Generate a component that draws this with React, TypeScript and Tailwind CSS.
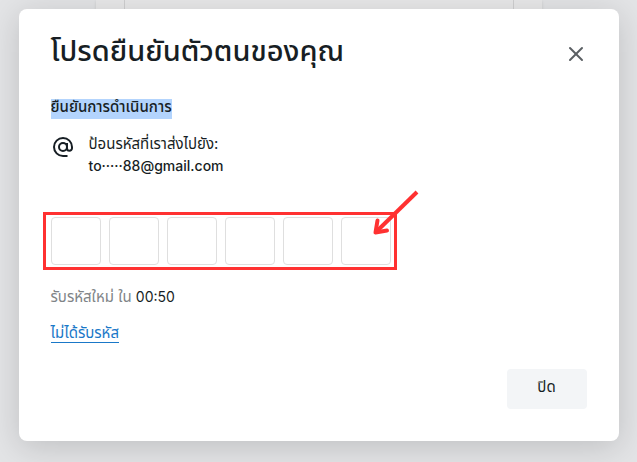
import { X } from "lucide-react";

const CODE_LENGTH = 6;

const Backdrop = () => (
  <div className="absolute inset-0 flex justify-center bg-[#e3e4e6]" aria-hidden="true">
    <div className="h-1/2 w-[446px] bg-[#e8e8e9] px-7 shadow">
      <div className="h-full border-x border-[#cfcfd0]" />
    </div>
  </div>
);

const AtIcon = () => (
  <svg
    className="mt-0.5 h-6 w-6"
    viewBox="0 0 24 24"
    fill="none"
    stroke="currentColor"
    strokeWidth="2"
    aria-hidden="true"
  >
    <circle cx="12" cy="12" r="4" />
    <path d="M16 8v5.200a2.500 2.500 0 0 0 5 0V12a9 9 0 1 0-9 9h4.500" />
  </svg>
);

const CodeInputs = () => (
  <fieldset aria-label="รหัส" className="relative flex w-fit gap-2">
    {Array.from({ length: CODE_LENGTH }, (_, index) => (
      <input
        key={index}
        type="text"
        inputMode="numeric"
        maxLength={1}
        aria-label={`${index + 1}`}
        className="h-12 w-[50px] rounded border border-[#dfdfdf] bg-white text-center text-xl outline-none"
      />
    ))}
    <div className="pointer-events-none absolute -top-[5px] -right-1.5 -bottom-[5px] -left-2 border-3 border-[#ff3131]" />
    <svg
      className="pointer-events-none absolute -top-7 -right-7 h-12 w-12"
      viewBox="0 0 48 48"
      fill="none"
      stroke="#ff3131"
      strokeWidth="4"
      strokeLinejoin="round"
      aria-hidden="true"
    >
      <path d="M46 3 5 43" />
      <path d="M6.500 31.500 4.500 43.500 16 41.500" strokeLinecap="round" />
    </svg>
  </fieldset>
);

const App = () => {
  return (
    <main className="relative flex min-h-screen items-start justify-center overflow-hidden pt-[9px] font-['Inter','Noto_Sans_Thai','Noto_Sans',sans-serif] text-[#171e24]">
      <Backdrop />
      <section
        role="dialog"
        aria-labelledby="verify-title"
        className="relative w-full max-w-[600px] rounded-lg bg-white px-8 pt-5 pb-8 shadow-[0_6px_32px_rgba(0,0,0,0.16)]"
      >
        <header className="flex items-center justify-between">
          <h1 id="verify-title" className="text-[29px] leading-11 font-medium">
            โปรดยืนยันตัวตนของคุณ
          </h1>
          <button type="button" aria-label="ปิด" className="-mr-px pt-1.5 text-[#5a5f63]">
            <X className="h-6 w-6" strokeWidth={2} />
          </button>
        </header>

        <h2 className="mt-[26px] w-fit bg-[#b3d4fd] pb-1 text-[15px] leading-4 font-medium">
          ยืนยันการดำเนินการ
        </h2>

        <div className="mt-3.5 flex items-start gap-3.5">
          <AtIcon />
          <p className="text-[15px] leading-[22px]">
            ป้อนรหัสที่เราส่งไปยัง:
            <br />
            <span className="text-sm leading-[22px] font-medium">to·····88@gmail.com</span>
          </p>
        </div>

        <div className="mt-10">
          <CodeInputs />
        </div>

        <p className="mt-5 text-[15px] leading-6 text-[#808487]">
          รับรหัสใหม่ ใน <span className="text-sm text-[#171e24]">00:50</span>
        </p>
        <a href="#" className="mt-3.5 block w-fit border-b border-[#1a78c8] text-[15px] leading-[19px] text-[#1a78c8]">
          ไม่ได้รับรหัส
        </a>

        <footer className="mt-[26px] flex justify-end">
          <button type="button" className="h-10 w-20 rounded bg-[#f3f5f7] pb-1 text-[15px]">
            ปิด
          </button>
        </footer>
      </section>
    </main>
  );
};

export default App;
